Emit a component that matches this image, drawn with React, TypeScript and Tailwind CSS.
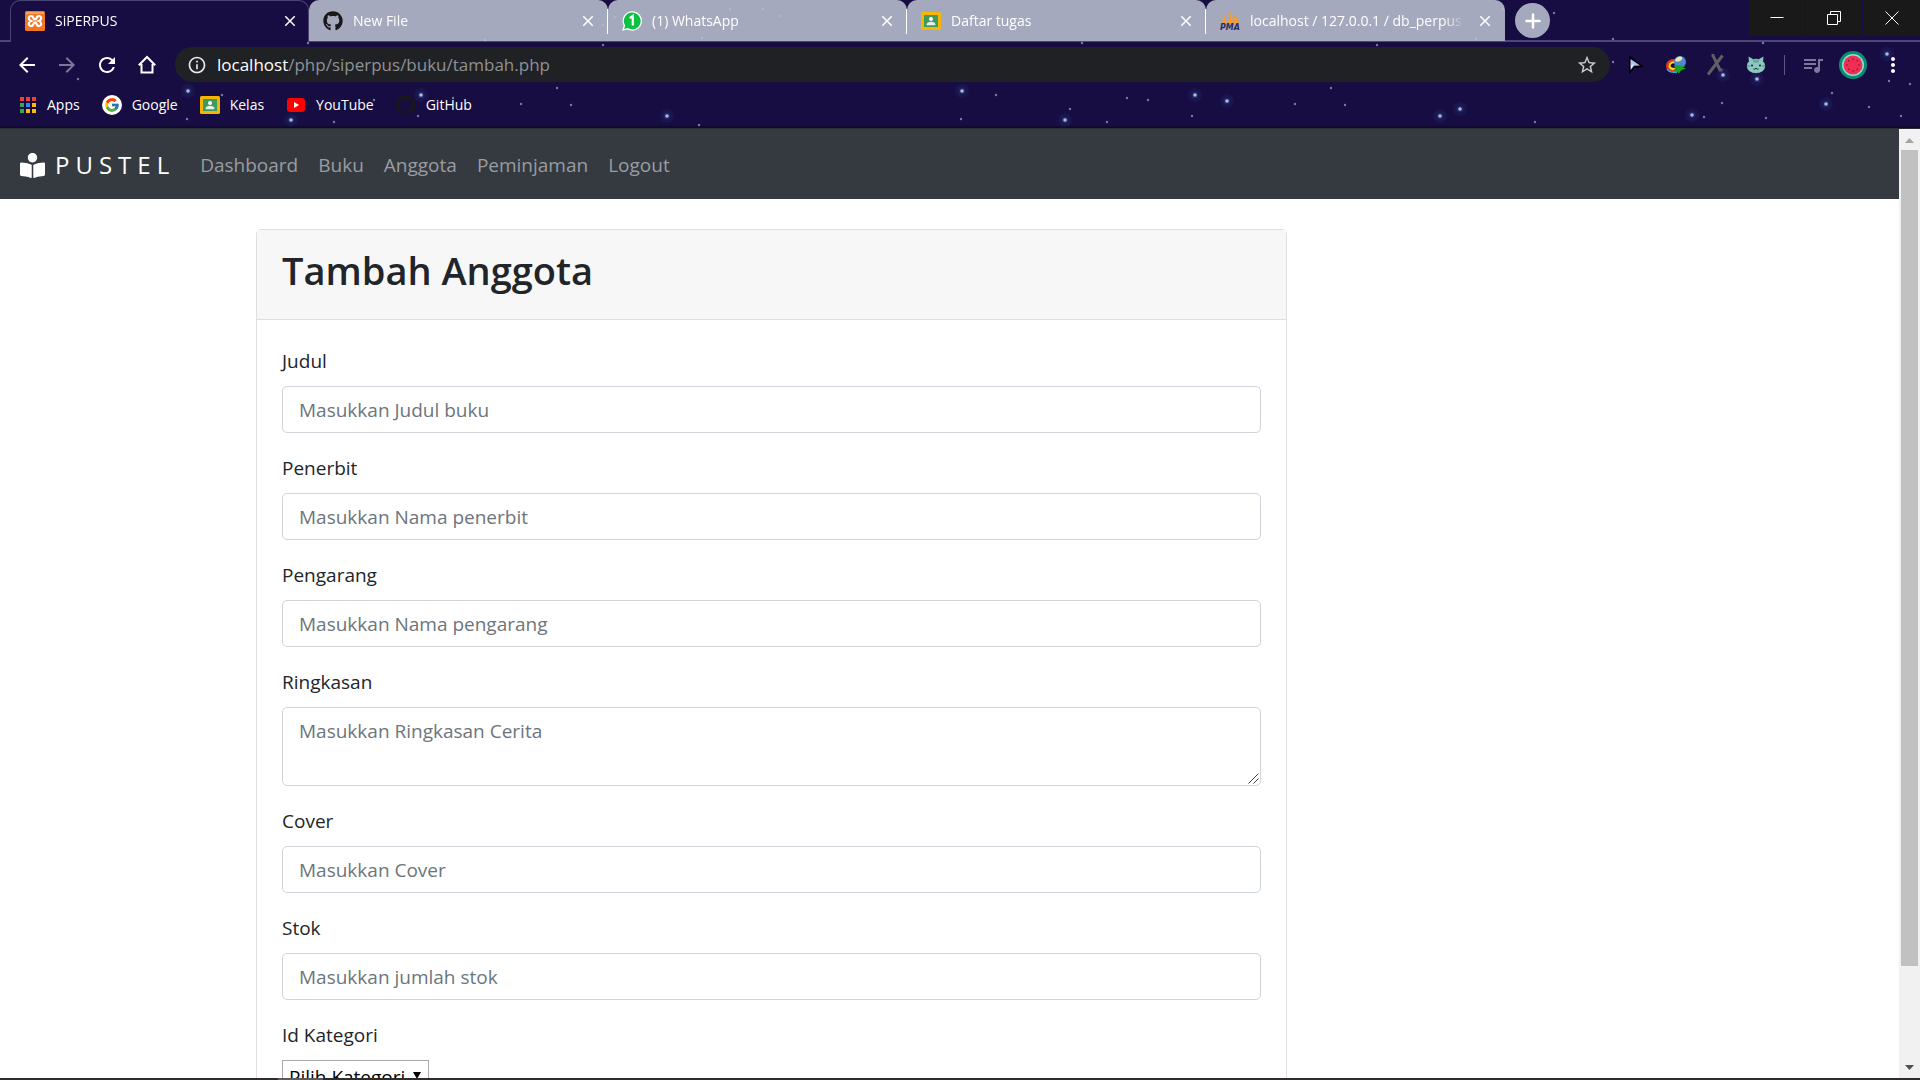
import React from "react";
import type { ReactNode } from "react";
import { FaBookReader, FaGithub } from "react-icons/fa";
import { FcGoogle } from "react-icons/fc";
import {
  MdArrowBack,
  MdArrowForward,
  MdClose,
  MdInfoOutline,
  MdMoreVert,
  MdQueueMusic,
  MdRefresh,
  MdStarBorder,
} from "react-icons/md";

/* x, y, radius of each star in the browser theme */
const stars: [number, number, number][] = [
  [188, 91, 2], [222, 95, 1], [187, 119, 1], [291, 120, 2], [334, 122, 1], [374, 100, 1],
  [421, 95, 2], [418, 116, 1], [453, 98, 1], [521, 104, 1], [557, 88, 1], [571, 105, 1],
  [308, 43, 1], [603, 45, 1], [78, 79, 1], [603, 25, 1], [615, 17, 1],
  [485, 40, 1], [667, 116, 2], [699, 125, 1], [702, 38, 1], [730, 9, 1], [763, 9, 1],
  [780, 16, 1], [962, 91, 2], [996, 95, 1], [961, 119, 1], [1065, 120, 2], [1070, 109, 1],
  [1082, 43, 1], [1107, 122, 1], [1127, 98, 1], [1148, 100, 1], [1195, 95, 2], [1192, 116, 1],
  [1227, 101, 2], [1295, 104, 1], [1331, 88, 1], [1345, 105, 1], [1377, 45, 1], [1389, 16, 1],
  [1440, 116, 2], [1460, 109, 2], [1476, 39, 1], [1503, 9, 1], [1554, 13, 1], [1613, 39, 1],
  [1613, 62, 1], [1535, 122, 1], [1692, 115, 2], [1704, 117, 1], [1722, 103, 1], [1723, 75, 2],
  [1757, 79, 2], [1766, 118, 1], [1763, 43, 1], [1832, 93, 1], [1826, 104, 2], [1887, 54, 2],
  [1889, 81, 1], [1910, 84, 1], [1869, 107, 1], [1901, 116, 1],
];

function StarField() {
  return (
    <svg className="pointer-events-none absolute inset-0 h-full w-full" aria-hidden="true">
      {stars.map(([x, y, r]) => (
        <g key={`${x}-${y}`}>
          {r > 1 && <circle cx={x} cy={y} r="7" fill="#2b4f9c" opacity="0.14" />}
          {r > 1 && <circle cx={x} cy={y} r="3.5" fill="#3f63b0" opacity="0.2" />}
          <circle cx={x} cy={y} r={r > 1 ? 1.8 : 1.2} fill="#b9bfe6" opacity={r > 1 ? 0.95 : 0.6} />
        </g>
      ))}
    </svg>
  );
}

function XamppIcon() {
  return (
    <svg viewBox="0 0 20 20" className="size-5">
      <rect width="20" height="20" rx="1.5" fill="#f37623" />
      <path d="M1 1h18v2H1z" fill="#f9a25f" />
      <path
        d="M8.500 7.500Q8 4.800 5.800 5 3.200 5.500 4 8q.5 1.500 2 2-1.500.5-2 2-.8 2.500 1.800 3Q8 15.200 8.500 12.500M11.500 7.500Q12 4.800 14.200 5q2.600.5 1.800 3-.5 1.500-2 2 1.500.5 2 2 .8 2.500-1.800 3-2.200.2-2.700-2.500M8.500 7.500q1.500 1.500 3 0M8.500 12.500q1.500-1.500 3 0"
        fill="none"
        stroke="#fff"
        strokeWidth="2.200"
      />
    </svg>
  );
}

function WhatsAppIcon() {
  return (
    <svg viewBox="0 0 20 20" className="size-5">
      <path d="M10.3.3a9.7 9.7 0 1 1-4.7 18.2L.2 19.8l1.5-5.2A9.7 9.7 0 0 1 10.3.3z" fill="#fff" />
      <path d="M10.3 1.6a8.4 8.4 0 1 1-4.5 15.5l-3.6.9 1-3.4A8.4 8.4 0 0 1 10.3 1.6z" fill="#0ac142" />
      <path d="M7.8 7.2 10.8 5v9.4" fill="none" stroke="#fff" strokeWidth="2.2" />
    </svg>
  );
}

function ClassroomIcon() {
  return (
    <svg viewBox="0 0 20 20" className="size-5">
      <rect y="1" width="20" height="18" rx="1.5" fill="#f6b704" />
      <rect x="3" y="4" width="14" height="12" fill="#3f9a5c" />
      <circle cx="10" cy="8" r="2" fill="#fff" />
      <path d="M5.5 14.2c0-2.4 2-3.4 4.5-3.4s4.5 1 4.5 3.4z" fill="#e4f1e9" />
    </svg>
  );
}

function PmaIcon() {
  return (
    <svg viewBox="0 0 20 20" className="size-5">
      <path d="M4 2 2 13l4-1zM10.5.5Q10 8 6.5 12.5l6-.5Q13 5 10.5.5zM14 3q1 5-.5 9.5l6-.5Q17 7 14 3z" fill="#f89c2a" />
      <text x="0" y="19" fontSize="8" fontWeight="700" fontStyle="italic" fontFamily="DejaVu Sans, sans-serif" fill="#2c2f5e">
        PMA
      </text>
    </svg>
  );
}

function AppsIcon() {
  const colours = ["#ea4335", "#ea4335", "#ea4335", "#34a853", "#2f86f6", "#fbbc05", "#34a853", "#fbbc05", "#fbbc05"];
  return (
    <svg viewBox="0 0 18 18" className="size-[18px]">
      {colours.map((c, i) => (
        <rect key={i} x={1 + (i % 3) * 6} y={1 + Math.floor(i / 3) * 6} width="4" height="4" fill={c} />
      ))}
    </svg>
  );
}

function YouTubeIcon() {
  return (
    <svg viewBox="0 0 20 20" className="size-5">
      <rect x="1" y="3" width="18" height="14" rx="3" fill="#f00" />
      <path d="M8 7v6l5-3z" fill="#fff" />
    </svg>
  );
}

function HomeIcon() {
  return (
    <svg viewBox="0 0 20 20" className="size-5" fill="none" stroke="#fff" strokeWidth="2">
      <path d="M4.500 9v8.500h11V9M1.800 10.300 10 2l8.200 8.300" />
    </svg>
  );
}

function CursorIcon() {
  return (
    <svg viewBox="0 0 20 20" className="size-5">
      <path d="M3 0v19l6-6 9-1z" fill="#000" />
      <path d="M4.500 4v11l3.500-4.200 6-.3z" fill="#d9a8f0" />
      <path d="M5 5v5l5-.5z" fill="#7fe3f5" />
      <path d="M5 14v-4l3-.4z" fill="#f4e6ff" />
    </svg>
  );
}

function DownloadManagerIcon() {
  return (
    <svg viewBox="0 0 22 20" className="h-5 w-[22px]">
      <path d="M13 6Q3 4 2.500 11q.5 5 9 4.500" fill="none" stroke="#e23a1e" strokeWidth="3" />
      <path d="M13 7.500Q5 6 4.500 11q.5 3.500 7 3" fill="none" stroke="#ffd91c" strokeWidth="2" />
      <path d="M2 14q2 4 10 3" fill="none" stroke="#3aa0ea" strokeWidth="1.500" />
      <circle cx="15" cy="7" r="6" fill="#4f86d8" />
      <path d="M10 6a5 5 0 0 1 7-4q1 3-2 4t-5 0z" fill="#e9e7a0" />
      <path d="M9 10l11 1-2 1.500 3 1-5 2-2 3-3-3-3 0 2-2z" fill="#18a51c" />
    </svg>
  );
}

function CrossedIcon() {
  return (
    <svg viewBox="0 0 20 22" className="h-[22px] w-5">
      <path d="M2 20.500 16.500 1.500M5.500 1.500h1.500L14 16h2.500" fill="none" stroke="#625f64" strokeWidth="3" />
    </svg>
  );
}

function CatIcon() {
  return (
    <svg viewBox="0 0 20 20" className="size-5">
      <path d="M3 7 2.500 1.500 7 4M17 7l.5-5.500L13 4" fill="#8cc7c0" />
      <ellipse cx="10" cy="11" rx="9.200" ry="7.300" fill="#8cc7c0" />
      <path d="M8 4.500v3M10 4.500v3.500M12 4.500v3M1 11h3M16 11h3" stroke="#4b8785" strokeWidth="1" />
      <circle cx="6" cy="10.500" r="1.100" fill="#1c3440" />
      <circle cx="14" cy="10.500" r="1.100" fill="#1c3440" />
      <path d="M7.500 14q1.500 1 2.500-1 1 2 2.500 1" fill="none" stroke="#1c3440" />
    </svg>
  );
}

function WatermelonIcon() {
  return (
    <svg viewBox="0 0 28 28" className="size-7">
      <circle cx="14" cy="14" r="14" fill="#0b8a78" />
      <circle cx="14" cy="14" r="11" fill="#7fe9c6" />
      <circle cx="14" cy="14" r="9.500" fill="#f22d55" />
      {[0, 45, 90, 135, 180, 225, 270, 315].map((a) => (
        <circle key={a} cx="14" cy="8" r="0.700" fill="#5b1230" transform={`rotate(${a} 14 14)`} />
      ))}
    </svg>
  );
}

function Tab({ icon, title, active, divided }: { icon: ReactNode; title: string; active?: boolean; divided?: boolean }) {
  return (
    <div
      className={
        active
          ? "relative flex h-[42px] w-[299px] min-w-0 items-center gap-2.5 rounded-t-[10px] border-x border-t border-[#4a4474] bg-[#170d43] pr-2 pb-[2px] pl-3.5"
          : "relative flex h-[41px] w-[299px] min-w-0 items-center gap-2.5 rounded-t-[10px] bg-[#a5a9be] pr-2.5 pl-3.5"
      }
    >
      {divided && <span className="absolute top-[9px] left-[-1px] h-[25px] w-px bg-white" />}
      <span className="shrink-0">{icon}</span>
      <span className="min-w-0 flex-1 overflow-hidden text-sm whitespace-nowrap text-white [mask-image:linear-gradient(to_right,#000_90%,transparent)]">
        {title}
      </span>
      <button type="button" aria-label={`Close ${title}`} className="flex size-5 shrink-0 items-center justify-center text-white">
        <MdClose className="size-[18px]" />
      </button>
    </div>
  );
}

function ToolButton({ label, children }: { label: string; children: ReactNode }) {
  return (
    <button type="button" aria-label={label} className="flex h-9 w-10 items-center justify-center text-white">
      {children}
    </button>
  );
}

function Bookmark({ icon, label }: { icon: ReactNode; label: string }) {
  return (
    <a href="#" className="flex items-center gap-2.5 text-sm text-white">
      {icon}
      {label}
    </a>
  );
}

function BrowserChrome() {
  return (
    <header className="relative shrink-0 border-b border-[#2a2f36] bg-[#170d43]">
      <div className="flex h-[42px] justify-between border-b-2 border-[#4d4779] pl-2.5">
        <div className="flex min-w-0">
          <Tab active icon={<XamppIcon />} title="SiPERPUS" />
          <Tab icon={<FaGithub className="size-5 text-[#191717]" />} title="New File" />
          <Tab divided icon={<WhatsAppIcon />} title="(1) WhatsApp" />
          <Tab divided icon={<ClassroomIcon />} title="Daftar tugas" />
          <Tab divided icon={<PmaIcon />} title="localhost / 127.0.0.1 / db_perpus" />
          <button
            type="button"
            aria-label="New tab"
            className="mt-[3px] ml-2.5 flex size-[35px] shrink-0 items-center justify-center rounded-full bg-[#a5a9be]"
          >
            <svg viewBox="0 0 16 16" className="size-4" stroke="#fff" strokeWidth="2.500" strokeLinecap="round">
              <path d="M8 1.500v13M1.500 8h13" />
            </svg>
          </button>
        </div>
        <div className="flex h-9 shrink-0 gap-px text-white">
          <button type="button" aria-label="Minimize" className="flex w-14 items-center justify-center bg-[#191919]">
            <svg viewBox="0 0 14 14" className="size-3.5" fill="none" stroke="#fff">
              <path d="M0.500 6.500h13" />
            </svg>
          </button>
          <button type="button" aria-label="Restore" className="flex w-14 items-center justify-center bg-[#191919]">
            <svg viewBox="0 0 14 14" className="size-3.5" fill="none" stroke="#fff">
              <path d="M0.500 3.500h10v10h-10zM3.500 3.500v-3h10v10h-3" />
            </svg>
          </button>
          <button type="button" aria-label="Close" className="flex w-[57px] items-center justify-center bg-[#191919]">
            <svg viewBox="0 0 14 14" className="size-3.5" fill="none" stroke="#fff">
              <path d="M0.500 0.500l13 13M13.500 0.500l-13 13" />
            </svg>
          </button>
        </div>
      </div>

      <div className="flex h-[45px] items-center px-[7px]">
        <ToolButton label="Back"><MdArrowBack className="size-6" /></ToolButton>
        <ToolButton label="Forward"><MdArrowForward className="size-6 text-[#7d779b]" /></ToolButton>
        <ToolButton label="Reload"><MdRefresh className="size-6" /></ToolButton>
        <ToolButton label="Home"><HomeIcon /></ToolButton>
        <div className="ml-2 flex h-[35px] min-w-0 flex-1 items-center rounded-full bg-[#202124] px-3">
          <MdInfoOutline className="size-5 shrink-0 text-[#e8eaed]" />
          <a href="#" className="ml-2.5 flex-1 text-[17px] text-[#8f9296]">
            <span className="text-white">localhost</span>/php/siperpus/buku/tambah.php
          </a>
          <button type="button" aria-label="Bookmark this page">
            <MdStarBorder className="size-[22px] text-[#c9cacc]" />
          </button>
        </div>
        <div className="ml-1.5 flex items-center">
          <ToolButton label="Custom cursor"><CursorIcon /></ToolButton>
          <ToolButton label="Download manager"><DownloadManagerIcon /></ToolButton>
          <ToolButton label="X extension"><CrossedIcon /></ToolButton>
          <ToolButton label="Cat extension"><CatIcon /></ToolButton>
          <span className="mx-2 h-5 w-px bg-[#5d577f]" />
          <ToolButton label="Media"><MdQueueMusic className="size-6 text-[#7d779b]" /></ToolButton>
          <ToolButton label="Profile"><WatermelonIcon /></ToolButton>
          <ToolButton label="Menu"><MdMoreVert className="size-6" /></ToolButton>
        </div>
      </div>

      <nav aria-label="Bookmarks" className="flex h-[41px] items-center gap-[22px] border-b-2 border-[#0f0833] pb-[3px] pl-[19px]">
        <Bookmark icon={<AppsIcon />} label="Apps" />
        <Bookmark
          icon={<span className="flex size-5 items-center justify-center rounded-full bg-white"><FcGoogle className="size-4" /></span>}
          label="Google"
        />
        <Bookmark icon={<ClassroomIcon />} label="Kelas" />
        <Bookmark icon={<YouTubeIcon />} label="YouTube" />
        <Bookmark icon={<FaGithub className="size-5 text-[#191717]" />} label="GitHub" />
      </nav>
      <StarField />
    </header>
  );
}

const controlClass =
  "block w-full rounded-[5px] border border-[#ced4da] bg-white px-4 text-[19px] leading-[30px] text-[#495057] placeholder:text-[#6c757d] placeholder:opacity-100";

function Field({ id, label, placeholder, multiline }: { id: string; label: string; placeholder: string; multiline?: boolean }) {
  return (
    <div className="mb-5">
      <label htmlFor={id} className="mb-2.5 block">{label}</label>
      {multiline ? (
        <div className="relative">
          <textarea
            id={id}
            placeholder={placeholder}
            className={`${controlClass} h-[79px] resize-y py-2 [&::-webkit-resizer]:hidden`}
          />
          <svg viewBox="0 0 11 11" className="pointer-events-none absolute right-[2px] bottom-[2px] size-[11px]" stroke="#444">
            <path d="M0.500 10.500l10-10M5.500 10.500l5-5" />
          </svg>
        </div>
      ) : (
        <input id={id} type="text" placeholder={placeholder} className={`${controlClass} h-[47px]`} />
      )}
    </div>
  );
}

function Page() {
  return (
    <div className="min-w-0 flex-1 overflow-hidden bg-white text-[19px] leading-[30px] text-[#212529]">
      <nav aria-label="Main" className="flex h-[70px] items-center bg-[#343a40] px-5 pt-[2px] text-[#9a9da0]">
        <a href="#" className="mr-[25px] flex items-center gap-2.5 text-2xl text-white">
          <FaBookReader className="size-[25px]" />
          <span className="tracking-[6px]">PUSTEL</span>
        </a>
        <div className="flex gap-5">
          <a href="#">Dashboard</a>
          <a href="#">Buku</a>
          <a href="#">Anggota</a>
          <a href="#">Peminjaman</a>
          <a href="#">Logout</a>
        </div>
      </nav>
      <main className="mx-auto max-w-[1425px] px-[19px] pt-[30px]">
        <div className="w-[1031px] max-w-full rounded-[5px] border border-[#dfdfdf]">
          <div className="border-b border-[#dfdfdf] bg-[#f7f7f7] px-[25px] pt-4 pb-[25px]">
            <h1 className="text-[38px] leading-[48px] font-semibold">Tambah Anggota</h1>
          </div>
          <form className="px-[25px] py-[26px]">
            <Field id="judul" label="Judul" placeholder="Masukkan Judul buku" />
            <Field id="penerbit" label="Penerbit" placeholder="Masukkan Nama penerbit" />
            <Field id="pengarang" label="Pengarang" placeholder="Masukkan Nama pengarang" />
            <Field id="ringkasan" label="Ringkasan" placeholder="Masukkan Ringkasan Cerita" multiline />
            <Field id="cover" label="Cover" placeholder="Masukkan Cover" />
            <Field id="stok" label="Stok" placeholder="Masukkan jumlah stok" />
            <label htmlFor="kategori" className="mb-2.5 block">Id Kategori</label>
            <div className="relative inline-block">
              <select
                id="kategori"
                className="block h-[33px] w-[147px] appearance-none border border-[#a9a9a9] bg-white pl-1.5 text-[19px] leading-[30px] text-black"
              >
                <option>Pilih Kategori</option>
              </select>
              <svg viewBox="0 0 8 8" className="pointer-events-none absolute top-3 right-2 size-2">
                <path d="M0 0h8L4 7z" fill="#000" />
              </svg>
            </div>
          </form>
        </div>
      </main>
    </div>
  );
}

function Scrollbar() {
  return (
    <div className="flex w-[21px] shrink-0 flex-col items-center bg-[#f1f1f1]" aria-hidden="true">
      <svg viewBox="0 0 21 21" className="size-[21px] shrink-0">
        <path d="M6 14h9l-4.500-5z" fill="#a3a3a3" />
      </svg>
      <div className="flex min-h-0 w-full flex-1 flex-col px-[2px]">
        <div className="h-[90%] bg-[#c1c1c1]" />
      </div>
      <svg viewBox="0 0 21 21" className="size-[21px] shrink-0">
        <path d="M6 8h9l-4.500 5z" fill="#505050" />
      </svg>
    </div>
  );
}

export default function App() {
  return (
    <div className="flex h-screen flex-col overflow-hidden font-['Open_Sans','Noto_Sans',sans-serif]">
      <BrowserChrome />
      <div className="flex min-h-0 flex-1">
        <Page />
        <Scrollbar />
      </div>
      <div className="flex h-[2px] shrink-0 bg-[#2e2c2d] pl-[278px]">
        <div className="w-[45px] bg-[#5c5a5b]" />
      </div>
    </div>
  );
}
